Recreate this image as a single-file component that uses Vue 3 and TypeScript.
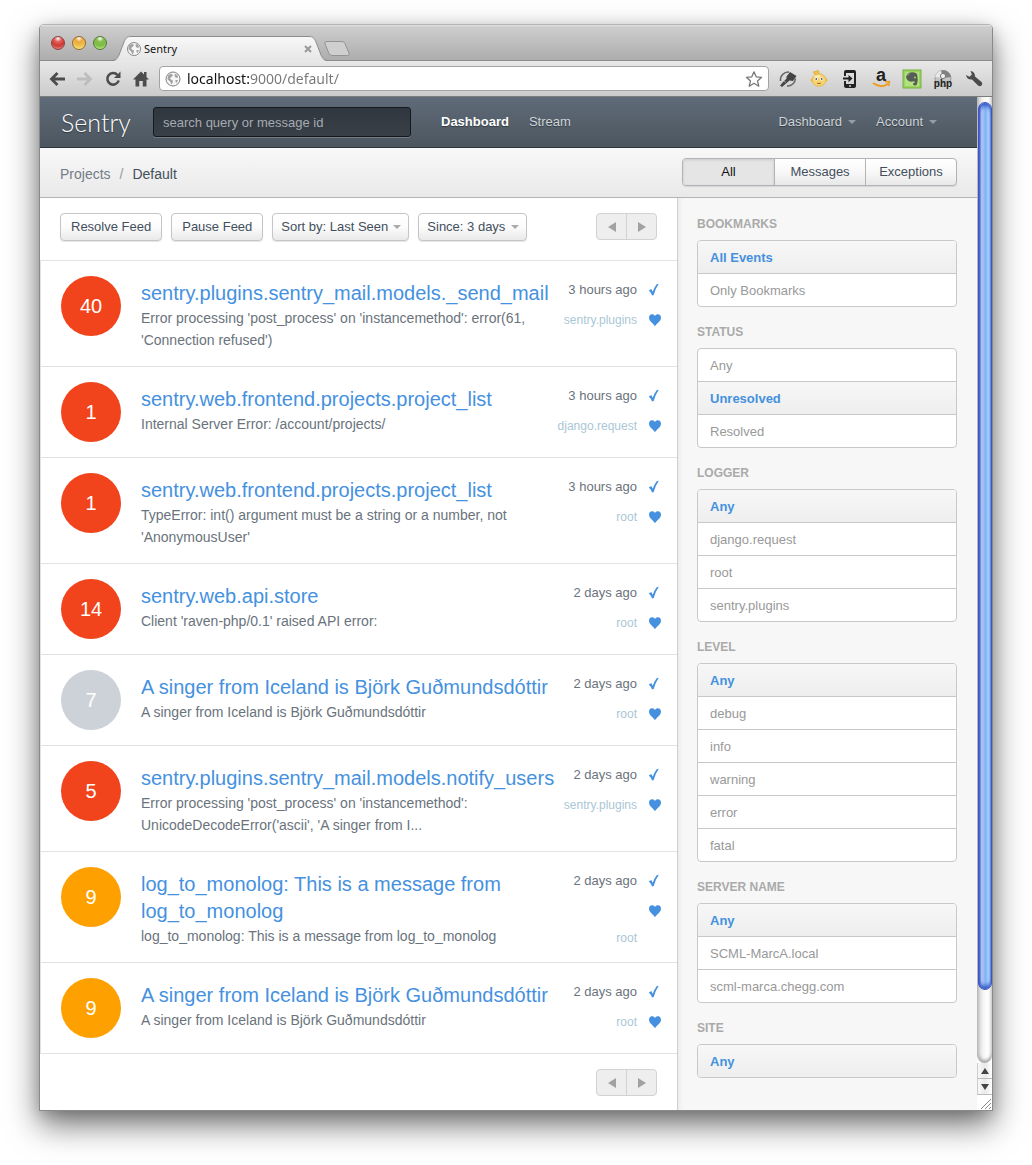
<script setup lang="ts">
import { ref } from 'vue'

type Level = 'error' | 'warning' | 'muted'

interface EventGroup {
  id: number
  count: number
  level: Level
  title: string
  message: string
  seen: string
  logger: string
}

interface Filter {
  label: string
  options: string[]
  selected: string
}

const views = ['All', 'Messages', 'Exceptions']
const activeView = ref('All')
const address = ref('localhost:9000/default/')
const query = ref('')

const groups: EventGroup[] = [
  { id: 1, count: 40, level: 'error', title: 'sentry.plugins.sentry_mail.models._send_mail', message: "Error processing 'post_process' on 'instancemethod': error(61, 'Connection refused')", seen: '3 hours ago', logger: 'sentry.plugins' },
  { id: 2, count: 1, level: 'error', title: 'sentry.web.frontend.projects.project_list', message: 'Internal Server Error: /account/projects/', seen: '3 hours ago', logger: 'django.request' },
  { id: 3, count: 1, level: 'error', title: 'sentry.web.frontend.projects.project_list', message: "TypeError: int() argument must be a string or a number, not 'AnonymousUser'", seen: '3 hours ago', logger: 'root' },
  { id: 4, count: 14, level: 'error', title: 'sentry.web.api.store', message: "Client 'raven-php/0.1' raised API error:", seen: '2 days ago', logger: 'root' },
  { id: 5, count: 7, level: 'muted', title: 'A singer from Iceland is Björk Guðmundsdóttir', message: 'A singer from Iceland is Björk Guðmundsdóttir', seen: '2 days ago', logger: 'root' },
  { id: 6, count: 5, level: 'error', title: 'sentry.plugins.sentry_mail.models.notify_users', message: "Error processing 'post_process' on 'instancemethod': UnicodeDecodeError('ascii', 'A singer from I...", seen: '2 days ago', logger: 'sentry.plugins' },
  { id: 7, count: 9, level: 'warning', title: 'log_to_monolog: This is a message from log_to_monolog', message: 'log_to_monolog: This is a message from log_to_monolog', seen: '2 days ago', logger: 'root' },
  { id: 8, count: 9, level: 'warning', title: 'A singer from Iceland is Björk Guðmundsdóttir', message: 'A singer from Iceland is Björk Guðmundsdóttir', seen: '2 days ago', logger: 'root' },
]

const filters = ref<Filter[]>([
  { label: 'Bookmarks', options: ['All Events', 'Only Bookmarks'], selected: 'All Events' },
  { label: 'Status', options: ['Any', 'Unresolved', 'Resolved'], selected: 'Unresolved' },
  { label: 'Logger', options: ['Any', 'django.request', 'root', 'sentry.plugins'], selected: 'Any' },
  { label: 'Level', options: ['Any', 'debug', 'info', 'warning', 'error', 'fatal'], selected: 'Any' },
  { label: 'Server Name', options: ['Any', 'SCML-MarcA.local', 'scml-marca.chegg.com'], selected: 'Any' },
  { label: 'Site', options: ['Any'], selected: 'Any' },
])
</script>

<template>
  <div class="window">
    <div class="titlebar">
      <div class="lights">
        <button class="light red" type="button" aria-label="Close window"></button>
        <button class="light yellow" type="button" aria-label="Minimize window"></button>
        <button class="light green" type="button" aria-label="Zoom window"></button>
      </div>
      <div class="tab">
        <svg class="tab-shape" viewBox="0 0 218 25" aria-hidden="true">
          <defs>
            <linearGradient id="tabFill" x1="0" y1="0" x2="0" y2="1">
              <stop offset="0" stop-color="#f8f8f8" />
              <stop offset="1" stop-color="#e6e6e6" />
            </linearGradient>
          </defs>
          <path d="M0 25 C5 25 6 23 8 19 L13 6 C15 2 16 .5 20 .5 H198 C202 .5 203 2 205 6 L210 19 C212 23 213 25 218 25 Z" fill="url(#tabFill)" />
          <path d="M0 24.500 C5 24.500 6 23 8 19 L13 6 C15 2 16 .5 20 .5 H198 C202 .5 203 2 205 6 L210 19 C212 23 213 24.500 218 24.500" fill="none" stroke="#8c8c8c" />
        </svg>
        <svg class="globe" viewBox="0 0 16 16" aria-hidden="true">
          <circle cx="8" cy="8" r="6.500" fill="#f6f6f6" stroke="#888" />
          <path d="M3 4.500 L6 2.500 L8 4 L6.500 6 L5 7 L6 8.500 L8 9.500 L7.500 12 L6.500 13.500 L5 10.500 L2.500 8 Z M10 2.500 L13 5 L12.500 7 L10.500 6.500 L9.500 4.500 Z M10.500 9 L13 9 L11.500 12 L10.500 11 Z" fill="#a2a2a2" />
        </svg>
        <span class="tab-title">Sentry</span>
        <button class="tab-close" type="button" aria-label="Close tab">
          <svg viewBox="0 0 8 8"><path d="M1 1 L7 7 M7 1 L1 7" stroke="#999" stroke-width="2" /></svg>
        </button>
      </div>
      <button class="new-tab" type="button" aria-label="New tab">
        <svg viewBox="0 0 28 17"><path d="M4 1.500 H19 Q21 1.500 22 3.500 L26 13 Q27 15.500 24.500 15.500 H9 Q7 15.500 6 13.500 L2 4 Q1 1.500 4 1.500 Z" fill="#cfcfcf" stroke="#939393" /></svg>
      </button>
    </div>

    <div class="toolbar">
      <div class="browser-nav">
        <button type="button" aria-label="Back">
          <svg viewBox="0 0 18 18"><path d="M9.500 3 L3.500 9 L9.500 15 M4 9 H17" fill="none" stroke="#4c4c4c" stroke-width="2.800" /></svg>
        </button>
        <button type="button" aria-label="Forward">
          <svg viewBox="0 0 18 18"><path d="M8.500 3 L14.500 9 L8.500 15 M14 9 H1" fill="none" stroke="#bdbdbd" stroke-width="2.800" /></svg>
        </button>
        <button type="button" aria-label="Reload">
          <svg viewBox="0 0 18 18"><path d="M13.500 5 A5.800 5.800 0 1 0 14.700 10.500" fill="none" stroke="#4c4c4c" stroke-width="2.600" /><path d="M16.500 1.500 V8 H10 Z" fill="#4c4c4c" /></svg>
        </button>
        <button type="button" aria-label="Home">
          <svg viewBox="0 0 18 18"><path d="M9 1.500 L17 9.500 H14.500 V16.500 H10.800 V11 H7.200 V16.500 H3.500 V9.500 H1 Z M12 2 H14.500 V7 H12 Z" fill="#4c4c4c" /></svg>
        </button>
      </div>
      <div class="omnibox">
        <svg class="globe" viewBox="0 0 16 16" aria-hidden="true">
          <circle cx="8" cy="8" r="7" fill="#f6f6f6" stroke="#808080" />
          <path d="M3 4.500 L6 2.500 L8 4 L6.500 6 L5 7 L6 8.500 L8 9.500 L7.500 12 L6.500 13.500 L5 10.500 L2.500 8 Z M10 2.500 L13 5 L12.500 7 L10.500 6.500 L9.500 4.500 Z M10.500 9 L13 9 L11.500 12 L10.500 11 Z" fill="#a2a2a2" />
        </svg>
        <input v-model="address" class="address" type="text" aria-label="Address" />
        <button class="star" type="button" aria-label="Bookmark this page">
          <svg viewBox="0 0 18 18"><path d="M9 1.800 L11.200 6.800 L16.600 7.300 L12.500 10.900 L13.800 16.200 L9 13.300 L4.200 16.200 L5.500 10.900 L1.400 7.300 L6.800 6.800 Z" fill="#fff" stroke="#777" stroke-width="1.300" stroke-linejoin="round" /></svg>
        </button>
      </div>
      <div class="extensions">
        <button type="button" aria-label="Highlighter">
          <svg viewBox="0 0 20 20"><path d="M2.500 12 A8 8 0 0 1 11 3" fill="none" stroke="#666" stroke-width="1.500" /><path d="M17.500 9.500 A8 8 0 0 1 9 17" fill="none" stroke="#666" stroke-width="1.500" /><path d="M12 3 L18.500 7 L15 12 L11.500 11.500 L4 18 L2 16.500 L8.500 9.500 L8.500 7.500 Z" fill="#444" /><path d="M4 14 L6 12 L8 13.500" fill="none" stroke="#999" /></svg>
        </button>
        <button type="button" aria-label="Baby face">
          <svg viewBox="0 0 20 20"><path d="M8 5.500 C3 5 4 1 7 3 C8 0 11 2 9.500 4.500" fill="#f4c74a" stroke="#e0aa38" /><circle cx="2.800" cy="11" r="1.600" fill="#edc052" /><circle cx="17.200" cy="11" r="1.600" fill="#edc052" /><ellipse cx="10" cy="11" rx="7" ry="6.300" fill="#f6d36f" stroke="#e2b04a" stroke-width=".8" /><ellipse cx="8.500" cy="7.500" rx="3.500" ry="1.500" fill="#fbe7a6" /><circle cx="7.300" cy="10" r="1.600" fill="#fff" /><circle cx="12.700" cy="10" r="1.600" fill="#fff" /><circle cx="7.300" cy="10" r=".9" fill="#4c5a70" /><circle cx="12.700" cy="10" r=".9" fill="#4c5a70" /><path d="M8 14 Q10 15.300 12 14" fill="none" stroke="#a9652a" /></svg>
        </button>
        <button type="button" aria-label="Send to phone">
          <svg viewBox="0 0 20 20"><path d="M6 1 H14 Q16 1 16 3 V17 Q16 19 14 19 H6 Q4 19 4 17 V12 H6 V15 H14 V4 H6 V7 H4 V3 Q4 1 6 1 Z" fill="#222" /><path d="M3 8.600 H8.500 V6 L12.500 9.600 L8.500 13.200 V10.600 H3 Z" fill="#222" /><circle cx="10" cy="17" r=".9" fill="#ddd" /></svg>
        </button>
        <button class="amazon" type="button" aria-label="Amazon">
          <span>a</span>
          <svg viewBox="0 0 20 20"><path d="M2 14 Q10 20 17 14.800" fill="none" stroke="#f19a20" stroke-width="2" /><path d="M14 12.800 L18.500 12.500 L17.500 17" fill="none" stroke="#f19a20" stroke-width="1.400" /></svg>
        </button>
        <button type="button" aria-label="Evernote">
          <svg viewBox="0 0 20 20"><rect x="1" y="1" width="18" height="18" fill="#9bd45c" stroke="#76b041" /><rect x="3" y="3" width="14" height="14" fill="#b4e180" /><path d="M4 7.500 L8 3.500 Q14.500 2.500 15.300 6 Q16.300 11 15 15.500 Q13 17.500 11 15.500 Q11 13 13.300 13.500 Q12 11.500 10.500 12.500 Q5 13.500 4 7.500 Z" fill="#565d56" /><circle cx="13" cy="8.500" r=".9" fill="#a6da70" /><path d="M4 6.500 L7.300 6.500 V3.300 Z" fill="#7a8478" /></svg>
        </button>
        <button class="php" type="button" aria-label="PHP reference">
          <svg viewBox="0 0 20 20"><circle cx="10" cy="9.500" r="8" fill="#c4c4c4" stroke="#9c9c9c" /><path d="M10 9 L2 8 A8 8 0 0 1 10 1.500 Z" fill="#e8e8e8" /><path d="M10 9 L18 8 A8 8 0 0 0 8 1.500 Z" fill="#808080" /><circle cx="10" cy="7" r="2.600" fill="#eee" stroke="#777" /></svg>
          <span>php</span>
        </button>
        <button type="button" aria-label="Settings">
          <svg viewBox="0 0 20 20"><path d="M6.500 2 Q11 2.500 11 7.500 L17.800 13.200 Q19 15 17.500 16.500 Q16 17.800 14.300 16.800 L8 10.500 Q3 11 2 6 L5.500 7.800 L7.900 5.600 Z" fill="#4c4c4c" /></svg>
        </button>
      </div>
    </div>

    <div class="viewport">
      <div class="page">
        <header class="app-header">
          <a class="logo" href="#">Sentry</a>
          <input v-model="query" class="search" type="text" placeholder="search query or message id" aria-label="Search" />
          <nav class="main-nav">
            <a class="current" href="#">Dashboard</a>
            <a href="#">Stream</a>
          </nav>
          <nav class="user-nav">
            <a href="#">Dashboard<i class="caret"></i></a>
            <a href="#">Account<i class="caret"></i></a>
          </nav>
        </header>

        <div class="subheader">
          <div class="breadcrumb">
            <a href="#">Projects</a>
            <span class="slash">/</span>
            <a class="here" href="#">Default</a>
          </div>
          <div class="segmented">
            <button v-for="view in views" :key="view" type="button" :class="{ active: view === activeView }" @click="activeView = view">{{ view }}</button>
          </div>
        </div>

        <div class="columns">
          <main class="stream">
            <div class="controls">
              <button class="btn" type="button">Resolve Feed</button>
              <button class="btn" type="button">Pause Feed</button>
              <span class="picker">
                <select class="btn" aria-label="Sort order"><option>Sort by: Last Seen</option></select>
                <i class="caret"></i>
              </span>
              <span class="picker">
                <select class="btn" aria-label="Time range"><option>Since: 3 days</option></select>
                <i class="caret"></i>
              </span>
              <div class="pager">
                <button type="button" aria-label="Previous page"><i class="arrow left"></i></button>
                <button type="button" aria-label="Next page"><i class="arrow right"></i></button>
              </div>
            </div>

            <ul class="events">
              <li v-for="group in groups" :key="group.id" class="event">
                <span class="count" :class="group.level">{{ group.count }}</span>
                <div class="details">
                  <div class="line">
                    <h3><a href="#">{{ group.title }}</a></h3>
                    <span class="seen">{{ group.seen }}</span>
                  </div>
                  <div class="line">
                    <p>{{ group.message }}</p>
                    <a class="logger" href="#">{{ group.logger }}</a>
                  </div>
                </div>
                <div class="actions">
                  <button type="button" aria-label="Resolve">
                    <svg viewBox="0 0 14 14"><path d="M.8 7.600 L3.300 6 L4.700 8.800 Q6.500 4 8.600 1.200 L10.800 .8 Q7.500 5.500 5.700 12 L4 12.400 Q2.800 9.300 .8 7.600 Z" fill="#4591df" /></svg>
                  </button>
                  <button type="button" aria-label="Bookmark">
                    <svg viewBox="0 0 14 14"><path d="M7 13.200 C5.500 10.500 1 8.800 1 4.600 C1 .4 5.800 .2 7 3 C8.200 .2 13 .4 13 4.600 C13 8.800 8.500 10.500 7 13.200 Z" fill="#4591df" /></svg>
                  </button>
                </div>
              </li>
            </ul>

            <div class="controls bottom">
              <div class="pager">
                <button type="button" aria-label="Previous page"><i class="arrow left"></i></button>
                <button type="button" aria-label="Next page"><i class="arrow right"></i></button>
              </div>
            </div>
          </main>

          <aside class="sidebar">
            <section v-for="filter in filters" :key="filter.label">
              <h6>{{ filter.label }}</h6>
              <ul>
                <li v-for="option in filter.options" :key="option" :class="{ active: option === filter.selected }">
                  <a href="#" @click.prevent="filter.selected = option">{{ option }}</a>
                </li>
              </ul>
            </section>
          </aside>
        </div>
      </div>

      <div class="scrollbar" aria-hidden="true">
        <div class="track"><div class="thumb"></div></div>
        <div class="step"><i class="arrow up"></i></div>
        <div class="step"><i class="arrow down"></i></div>
        <svg class="grip" viewBox="0 0 15 15"><path d="M4 14 L14 4 M8 14 L14 8 M12 14 L14 12" stroke="#888" /></svg>
      </div>
    </div>
  </div>
</template>

<style>
body {
  margin: 0;
  background: #fff;
}
</style>

<style scoped>
* {
  box-sizing: border-box;
}
.window {
  margin: 24px 39px 54px;
  border: 1px solid #8a8a8a;
  border-top-color: #b4b4b4;
  border-radius: 5px 5px 0 0;
  box-shadow: 0 14px 32px rgba(0, 0, 0, 0.55), 0 4px 14px rgba(0, 0, 0, 0.15);
  font: 13px/20px "Liberation Sans", Arial, sans-serif;
  color: #6a737c;
}
button,
input,
select {
  margin: 0;
  padding: 0;
  border: 0;
  background: none;
  font: inherit;
  color: inherit;
}
a {
  color: inherit;
  text-decoration: none;
}
ul,
h3,
h6,
p {
  margin: 0;
  padding: 0;
  list-style: none;
}
svg {
  display: block;
}

/* Browser frame */
.titlebar {
  display: flex;
  height: 36px;
  border-bottom: 1px solid #8c8c8c;
  border-radius: 4px 4px 0 0;
  background: linear-gradient(#e4e4e4, #cdcdcd 2px, #adadad);
}
.lights {
  display: flex;
  gap: 7px;
  padding: 11px 4px 0 11px;
}
.light {
  width: 14px;
  height: 14px;
  border: 1px solid #777;
  border-radius: 50%;
}
.light.red {
  border-color: #8d4040;
  background: radial-gradient(circle at 50% 12%, #fff 0, #e2605c 28%, #cc3a35 60%, #f59a8c);
}
.light.yellow {
  border-color: #96692f;
  background: radial-gradient(circle at 50% 12%, #fff 0, #eda63c 28%, #eec04b 60%, #fff28a);
}
.light.green {
  border-color: #52793a;
  background: radial-gradient(circle at 50% 12%, #fff 0, #87bf4e 28%, #7bbd45 60%, #d3f59a);
}
.tab {
  position: relative;
  display: flex;
  align-items: center;
  width: 218px;
  height: 25px;
  margin-top: 11px;
  padding: 0 17px 0 15px;
  color: #111;
  font: 11px/16px "Noto Sans", sans-serif;
}
.tab-shape {
  position: absolute;
  inset: 0;
  width: 218px;
  height: 25px;
}
.globe {
  position: relative;
  flex: none;
  width: 16px;
  height: 16px;
}
.tab-title {
  position: relative;
  flex: 1;
  padding-left: 2px;
}
.tab-close {
  position: relative;
}
.tab-close svg {
  width: 8px;
  height: 8px;
}
.new-tab {
  height: 17px;
  margin: 15px 0 0 -6px;
}
.new-tab svg {
  width: 28px;
  height: 17px;
}
.toolbar {
  display: flex;
  align-items: center;
  gap: 9px;
  height: 36px;
  padding: 0 8px;
  border-bottom: 1px solid #7c7c7c;
  background: linear-gradient(#e8e8e8, #cbcbcb);
}
.browser-nav {
  display: flex;
  gap: 10px;
}
.browser-nav svg,
.star svg {
  width: 18px;
  height: 18px;
}
.omnibox {
  display: flex;
  flex: 1;
  align-items: center;
  height: 25px;
  padding: 0 5px;
  border: 1px solid #a3a3a3;
  border-radius: 4px;
  background: #fff;
}
.address {
  flex: 1;
  min-width: 0;
  height: 20px;
  padding-left: 6px;
  /* Host name in black, the rest of the address in grey */
  background: linear-gradient(90deg, #111 68px, #777 68px);
  background-clip: text;
  -webkit-text-fill-color: transparent;
  font: 14px/20px "Noto Sans", sans-serif;
}
.extensions {
  display: flex;
  gap: 11px;
}
.extensions button {
  position: relative;
  width: 20px;
  height: 20px;
}
.extensions svg {
  width: 20px;
  height: 20px;
}
.extensions span {
  position: absolute;
  left: 0;
  width: 20px;
  color: #222;
  font-weight: bold;
  text-align: center;
}
.amazon span {
  top: -2px;
  font-size: 18px;
  line-height: 16px;
}
.php span {
  bottom: 0;
  font-size: 10px;
  line-height: 10px;
}

/* Page */
.viewport {
  display: flex;
}
.page {
  flex: 1;
  min-width: 0;
}
.app-header {
  display: flex;
  align-items: center;
  height: 51px;
  padding: 0 20px;
  border-bottom: 1px solid #2c333a;
  background: linear-gradient(#5f6b78, #4c565f);
  color: #cfd4d9;
  text-shadow: 0 1px 1px rgba(0, 0, 0, 0.4);
}
.logo {
  width: 93px;
  padding-left: 1px;
  color: #fff;
  font: 300 25px/30px Lato, sans-serif;
}
.search {
  width: 258px;
  height: 30px;
  padding: 0 9px;
  border: 1px solid #15181c;
  border-radius: 3px;
  background: linear-gradient(#30363d, #3a4048);
  box-shadow: 0 1px 0 rgba(255, 255, 255, 0.2);
  color: #c5c9ce;
}
.search::placeholder {
  color: #a5abb2;
  opacity: 1;
}
.main-nav,
.user-nav {
  display: flex;
  gap: 20px;
}
.main-nav {
  margin-left: 30px;
}
.current {
  color: #fff;
  font-weight: bold;
}
.user-nav {
  margin: 0 20px 0 auto;
}
.caret {
  display: inline-block;
  border: 4px solid transparent;
  border-top-color: #969da4;
  border-bottom: 0;
}
.user-nav .caret {
  margin-left: 6px;
  vertical-align: 2px;
}
.subheader {
  display: flex;
  align-items: flex-start;
  justify-content: space-between;
  height: 50px;
  padding: 10px 20px;
  border-bottom: 1px solid #b5b5b5;
  background: linear-gradient(#f8f8f8, #e9e9e9);
}
.breadcrumb {
  display: flex;
  gap: 9px;
  padding-top: 6px;
  color: #737c86;
  font-size: 14px;
}
.slash {
  color: #999;
}
.here {
  color: #434f5c;
}
.segmented {
  display: flex;
  border: 1px solid #b0b3b7;
  border-radius: 4px;
  background: linear-gradient(#fff, #f8f8f8 50%, #e8e8e8);
  box-shadow: 0 1px 1px rgba(0, 0, 0, 0.1);
  color: #434f5c;
}
.segmented button {
  width: 91px;
  height: 26px;
}
.segmented button + button {
  border-left: 1px solid #b0b3b7;
}
.segmented .active {
  border-radius: 3px 0 0 3px;
  background: #e5e5e5;
  box-shadow: inset 0 1px 3px rgba(0, 0, 0, 0.12);
  color: #111;
}
.columns {
  display: flex;
}
.stream {
  flex: 1;
  min-width: 0;
  background: #fff;
}
.controls {
  display: flex;
  gap: 9px;
  align-items: flex-start;
  padding: 15px 20px 19px;
}
.controls.bottom {
  padding-bottom: 14px;
}
.btn {
  height: 28px;
  padding: 0 10px;
  border: 1px solid #c3c5c8;
  border-radius: 4px;
  background: linear-gradient(#fff, #fcfcfc 50%, #e9e9e9);
  box-shadow: 0 1px 1px rgba(0, 0, 0, 0.1);
  color: #434f5c;
}
.picker {
  position: relative;
  display: flex;
}
.picker select {
  appearance: none;
  padding: 0 20px 0 8px;
}
.picker .caret {
  position: absolute;
  top: 12px;
  right: 8px;
  border-top-color: #aaa;
  pointer-events: none;
}
.pager {
  display: flex;
  margin-left: auto;
  border: 1px solid #d2d2d2;
  border-radius: 4px;
  background: #eee;
}
.pager button {
  display: flex;
  align-items: center;
  justify-content: center;
  width: 29px;
  height: 25px;
}
.pager button + button {
  width: 30px;
  border-left: 1px solid #d2d2d2;
}
.arrow {
  border: 4px solid transparent;
}
.arrow.left {
  border-width: 5px 8px 5px 0;
  border-right-color: #a2a2a2;
}
.arrow.right {
  border-width: 5px 0 5px 8px;
  border-left-color: #a2a2a2;
}
.arrow.up {
  border-width: 0 4px 6px;
  border-bottom-color: #444;
}
.arrow.down {
  border-width: 6px 4px 0;
  border-top-color: #444;
}
.events {
  border-bottom: 1px solid #e2e2e2;
  border-left: 1px solid #e2e2e2;
}
.event {
  display: flex;
  align-items: flex-start;
  padding: 15px 15px 15px 20px;
  border-top: 1px solid #e2e2e2;
}
.count {
  flex: none;
  width: 60px;
  height: 60px;
  border-radius: 50%;
  color: #fff;
  font-size: 20px;
  line-height: 60px;
  text-align: center;
}
.count.error {
  background: #f2441c;
}
.count.warning {
  background: #fea100;
}
.count.muted {
  background: #cdd2d9;
}
.details {
  flex: 1;
  min-width: 0;
  margin: 0 11px 0 20px;
  padding-top: 4px;
}
.line {
  display: flex;
  justify-content: space-between;
  gap: 14px;
}
.event h3 {
  color: #4591df;
  font-weight: normal;
  font-size: 20px;
  line-height: 27px;
}
.event p {
  font-size: 14px;
  line-height: 22px;
}
.seen,
.logger {
  flex: none;
}
.logger {
  padding-top: 4px;
  color: #aac7d6;
  font-size: 12px;
  line-height: 18px;
}
.actions {
  display: flex;
  flex-direction: column;
  gap: 12px;
  padding-top: 5px;
}
.actions button {
  width: 14px;
  height: 18px;
}
.actions svg {
  width: 14px;
  height: 14px;
}
.sidebar {
  width: 300px;
  padding: 1px 20px 16px 19px;
  border-left: 1px solid #cfcfcf;
  background: linear-gradient(90deg, #ededed, #f7f7f7 5px);
}
.sidebar h6 {
  padding: 16px 0 7px;
  color: #aaa;
  font-size: 12px;
  line-height: 18px;
  text-transform: uppercase;
}
.sidebar ul {
  border: 1px solid #c8c8c8;
  border-radius: 4px;
  background: #fff;
  overflow: hidden;
}
.sidebar li + li {
  border-top: 1px solid #c8c8c8;
}
.sidebar li a {
  display: block;
  padding: 2px 12px 0;
  color: #999;
  line-height: 30px;
}
.sidebar .active a {
  background: linear-gradient(#f7f7f7, #eee);
  color: #4591df;
  font-weight: bold;
}

/* Scroll bar */
.scrollbar {
  display: flex;
  flex: none;
  flex-direction: column;
  width: 15px;
  background: #fff;
}
.track {
  display: flex;
  flex: 1;
  padding: 5px 0 73px;
  border-left: 1px solid #bbb;
  border-radius: 0 0 8px 8px;
  background: linear-gradient(90deg, #d5d5d5, #f6f6f6 40%, #fff 70%, #e2e2e2);
  box-shadow: inset 0 -3px 3px #aaa;
}
.thumb {
  flex: 1;
  border: 1px solid #3f55c0;
  border-radius: 7px;
  background: linear-gradient(90deg, #4658d8, #b7cdf4 20%, #9abcf2 40%, #7fb0f5 55%, #b9e2ff 85%, #7da6e0);
  box-shadow: inset 0 4px 4px -1px #3358c8, inset 0 -4px 4px -1px #3358c8;
}
.step {
  display: flex;
  align-items: center;
  justify-content: center;
  height: 16px;
  border-bottom: 1px solid #bbb;
  border-left: 1px solid #ccc;
  background: linear-gradient(90deg, #f8f8f8, #e9e9e9 50%, #fff);
}
.grip {
  width: 15px;
  height: 15px;
}
</style>
